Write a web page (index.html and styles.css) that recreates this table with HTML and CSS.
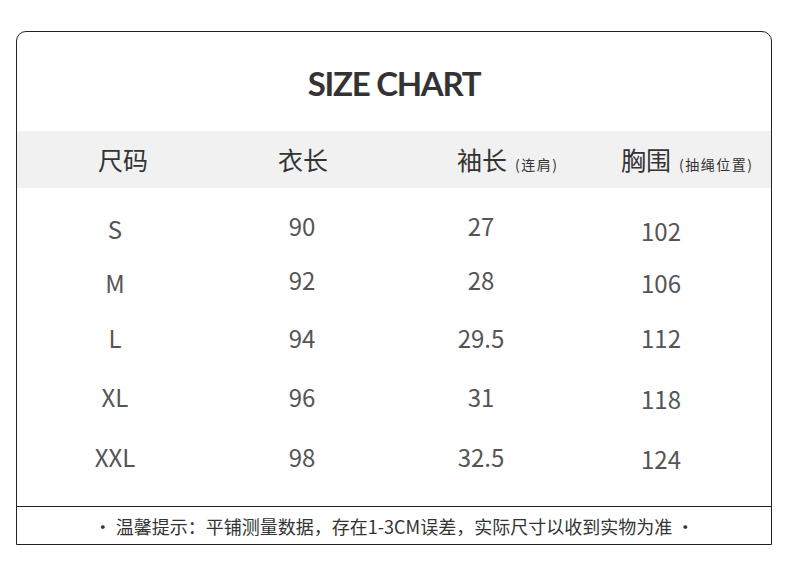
FILE: index.html
```html
<!DOCTYPE html>
<html lang="zh-CN">
<head>
<meta charset="utf-8">
<title>Size Chart</title>
<link rel="stylesheet" href="styles.css">
</head>
<body>
<div class="chart">
  <h1 class="title">SIZE CHART</h1>
  <div class="head">
    <div class="hc">尺码</div>
    <div class="hc">衣长</div>
    <div class="hc">袖长<small>(连肩)</small></div>
    <div class="hc">胸围<small>(抽绳位置)</small></div>
  </div>
  <div class="body">
    <div class="row r1"><span class="cell">S</span><span class="cell hi">90</span><span class="cell hi">27</span><span class="cell lo">102</span></div>
    <div class="row r2"><span class="cell">M</span><span class="cell hi">92</span><span class="cell hi">28</span><span class="cell">106</span></div>
    <div class="row r3"><span class="cell">L</span><span class="cell">94</span><span class="cell">29.5</span><span class="cell">112</span></div>
    <div class="row r4"><span class="cell">XL</span><span class="cell">96</span><span class="cell">31</span><span class="cell lo">118</span></div>
    <div class="row r5"><span class="cell">XXL</span><span class="cell">98</span><span class="cell">32.5</span><span class="cell lo">124</span></div>
  </div>
  <div class="note">• 温馨提示：平铺测量数据，存在1-3CM误差，实际尺寸以收到实物为准 •</div>
</div>
</body>
</html>
```
FILE: styles.css
```css
html, body {
  margin: 0;
  padding: 0;
  background: #ffffff;
}

body {
  font-family: "Noto Sans CJK SC", "Noto Sans", sans-serif;
  color: #444;
}

.chart {
  box-sizing: border-box;
  width: 756px;
  height: 514px;
  margin: 31px 0 0 16px;
  border: 1px solid #222;
  border-radius: 10px 10px 0 0;
  display: flex;
  flex-direction: column;
}

.title {
  margin: 0;
  height: 99px;
  display: flex;
  align-items: center;
  justify-content: center;
  font-family: "Lato", "Liberation Sans", sans-serif;
  font-weight: 700;
  font-size: 33px;
  letter-spacing: -1.3px;
  color: #333;
  padding-top: 2px;
  box-sizing: border-box;
}

.head {
  height: 57px;
  background: #f1f1f1;
  display: grid;
  grid-template-columns: 180px 179px 164px 1fr;
  padding-left: 81px;
  align-items: center;
  font-size: 25px;
  color: #333;
}

.hc {
  white-space: nowrap;
  line-height: 1;
}

.hc small {
  font-size: 14px;
  letter-spacing: 1.5px;
  margin-left: 8px;
  color: #333;
}

.body {
  flex: 1;
  display: flex;
  flex-direction: column;
  padding-top: 14px;
}

.row {
  display: grid;
  grid-template-columns: 196px 178px 180px 180px 1fr;
  align-items: center;
  font-size: 24px;
  color: #555;
}

.r1 { height: 54px; }
.r2 { height: 54px; }
.r3 { height: 56px; }
.r4 { height: 61px; }
.r5 { height: 60px; }

.cell {
  text-align: center;
  line-height: 30px;
}

.cell.hi { padding-bottom: 6px; }
.cell.lo { padding-top: 4px; }

.note {
  height: 37px;
  border-top: 1px solid #222;
  display: flex;
  align-items: center;
  justify-content: center;
  font-size: 18px;
  color: #333;
}
```
